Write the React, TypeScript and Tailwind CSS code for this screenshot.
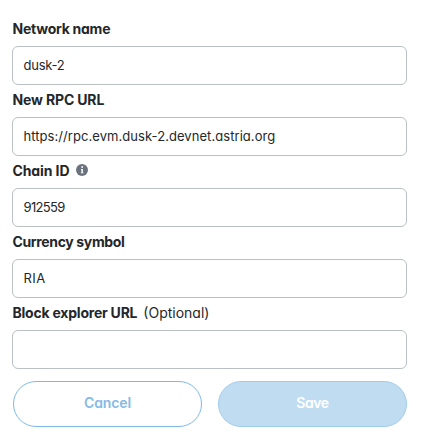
import type { ReactNode } from "react";

type FieldProps = {
  label: string;
  value: string;
  labelClass: string;
  valueClass?: string;
  extra?: ReactNode;
};

function InfoIcon() {
  return (
    <svg className="mb-0.5 ml-[7px] h-3 w-3 shrink-0" viewBox="0 0 12 12" aria-hidden="true">
      <circle cx="6" cy="6" r="6" fill="#6a737d" />
      <circle cx="6.2" cy="3" r="0.9" fill="#fff" />
      <path d="M4.9 4.9h2v3.5h.6v.9H4.8v-.9h.6V5.7h-.5z" fill="#fff" />
    </svg>
  );
}

function Field({ label, value, labelClass, valueClass = "", extra }: FieldProps) {
  return (
    <div className="pt-1">
      <div className="flex h-[22px] items-center pl-[0.5px] text-sm whitespace-nowrap">
        <span className={`font-bold ${labelClass}`}>{label}</span>
        {extra}
      </div>
      <div className="mt-1.5 flex h-[39px] items-center rounded-[6px] border border-[#bbc0c5] pb-0.5 pl-[10.5px] text-[13px] leading-5 whitespace-nowrap">
        <span className={valueClass}>{value}</span>
      </div>
    </div>
  );
}

export default function App() {
  return (
    <main className="h-[442px] w-[425px] bg-white pt-[14px] pr-[18px] pl-3 font-['Inter','Liberation_Sans',sans-serif] text-[#24272a] [font-feature-settings:'cv11']">
      <Field
        label="Network name"
        value="dusk-2"
        labelClass="tracking-[-0.25px]"
        valueClass="tracking-[-0.25px]"
      />
      <Field
        label="New RPC URL"
        value="https://rpc.evm.dusk-2.devnet.astria.org"
        labelClass="tracking-[-0.15px]"
        valueClass="tracking-[0.06px]"
      />
      <Field
        label="Chain ID"
        value="912559"
        labelClass="tracking-[-0.1px]"
        valueClass="tracking-[-0.65px]"
        extra={<InfoIcon />}
      />
      <Field
        label="Currency symbol"
        value="RIA"
        labelClass="tracking-[-0.35px]"
        valueClass="tracking-[0.4px]"
      />
      <Field
        label="Block explorer URL"
        value=""
        labelClass="tracking-[-0.22px]"
        extra={<span className="ml-1.5">(Optional)</span>}
      />
      <div className="mt-3 flex gap-4 pl-px text-sm font-semibold">
        <button className="h-[46px] flex-1 rounded-full border border-[#7fb9e6] pb-0.5 tracking-[-0.15px] text-[#84bbe6]">
          Cancel
        </button>
        <button className="h-[46px] flex-1 rounded-full border border-[#a0cceb] bg-[#c0dcf1] pb-0.5 tracking-[-0.4px] text-white">
          Save
        </button>
      </div>
    </main>
  );
}
